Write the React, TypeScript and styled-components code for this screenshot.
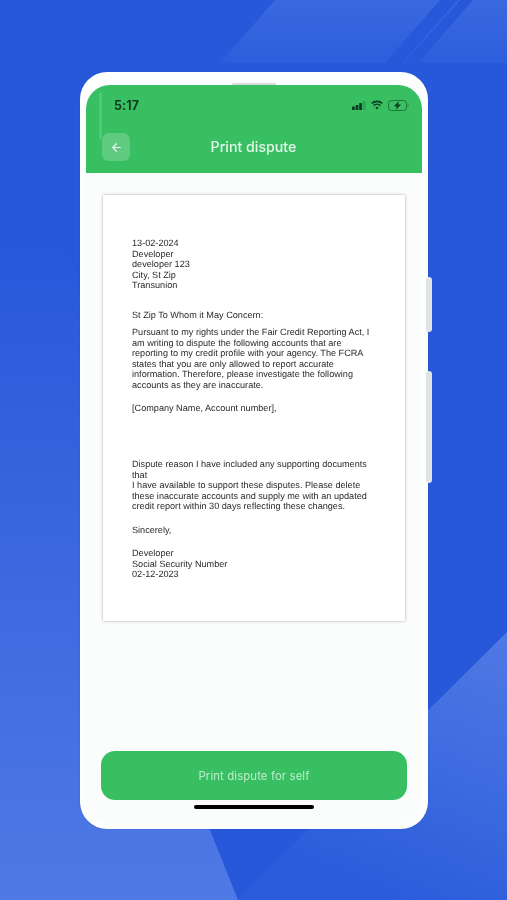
import React from 'react';
import styled, { createGlobalStyle } from 'styled-components';
import { ArrowLeft } from 'lucide-react';

const Global = createGlobalStyle`
  html, body { margin: 0; padding: 0; height: 100%; }
  body { font-family: "Inter", "Liberation Sans", sans-serif; background: #2758da; }
  * { box-sizing: border-box; }
`;

const Page = styled.div`
  position: relative;
  width: 507px;
  height: 900px;
  overflow: hidden;
  background: #2758da;
  padding-top: 72px;
  display: flex;
  justify-content: center;
  align-items: flex-start;
  filter: blur(0.35px);
`;

const Backdrop = styled.svg`
  position: absolute;
  inset: 0;
`;

const Phone = styled.div`
  position: relative;
  width: 348px;
  height: 757px;
  margin-left: 1px;
  background: #fdfefe;
  border-radius: 27px;
  padding: 13px 6px 6px;
  display: flex;
  box-shadow: 0 0 1px rgba(20, 50, 130, 0.5);
`;

const SideKey = styled.div<{ $top: number; $height: number }>`
  position: absolute;
  right: -4px;
  top: ${p => p.$top}px;
  width: 6px;
  height: ${p => p.$height}px;
  background: #dfe3e4;
  border-radius: 3px;
`;

const Speaker = styled.div`
  position: absolute;
  top: 11px;
  left: 152px;
  width: 44px;
  height: 3px;
  background: #d5dad8;
  border-radius: 2px;
`;

const Screen = styled.div`
  flex: 1;
  display: flex;
  flex-direction: column;
  background: #fbfdfd;
  border-radius: 24px;
`;

const Header = styled.header`
  position: relative;
  height: 88px;
  background: #37bf62;
  border-radius: 24px 24px 0 0;
  padding: 11px 13px 0 28px;
  flex-shrink: 0;
`;

const Glint = styled.div`
  position: absolute;
  left: 13px;
  top: 8px;
  width: 3px;
  height: 46px;
  background: rgba(255, 255, 255, 0.14);
`;

const StatusBar = styled.div`
  display: flex;
  align-items: center;
  justify-content: space-between;
  height: 18px;
`;

const Time = styled.span`
  font-size: 12.5px;
  font-weight: 700;
  color: #0f3a1f;
  letter-spacing: 0.1px;
`;

const StatusIcons = styled.div`
  display: flex;
  align-items: center;
  gap: 5px;
`;

const NavRow = styled.div`
  position: absolute;
  left: 16px;
  right: 16px;
  top: 48px;
  height: 28px;
  display: flex;
  align-items: center;
  justify-content: center;
`;

const BackButton = styled.button`
  position: absolute;
  left: 0;
  top: 0;
  width: 28px;
  height: 28px;
  padding: 0;
  border: 0;
  border-radius: 7px;
  background: rgba(255, 255, 255, 0.2);
  color: #e8f8ee;
  display: flex;
  align-items: center;
  justify-content: center;
`;

const Title = styled.h1`
  margin: -2px 0 0 -1px;
  font-size: 14.2px;
  font-weight: 500;
  color: #e4f7ea;
`;

const Content = styled.main`
  flex: 1;
  display: flex;
  flex-direction: column;
  padding: 22px 15px 0;
`;

const Paper = styled.article`
  margin: 0 2px;
  height: 426px;
  background: #fff;
  box-shadow: 0 0 3px rgba(80, 90, 90, 0.4), 0 0 1px rgba(80, 90, 90, 0.3);
  padding: 43px 30px 0 29px;
  font-family: "Liberation Sans", Arial, sans-serif;
  font-size: 9.15px;
  line-height: 10.55px;
  color: #2b2b2b;
  text-rendering: geometricPrecision;
`;

const Block = styled.p<{ $gap?: number }>`
  margin: ${p => p.$gap ?? 0}px 0 0;
`;

const PrintButton = styled.button`
  margin-top: auto;
  height: 49px;
  border: 0;
  border-radius: 14px;
  background: #37bf62;
  color: #bdeccb;
  font-family: "Inter", sans-serif;
  font-size: 11.4px;
  font-weight: 400;
  letter-spacing: 0.1px;
  padding-bottom: 1px;
`;

const HomeBar = styled.div`
  width: 120px;
  height: 4px;
  margin: 5px auto 14px;
  border-radius: 2px;
  background: #000;
`;

const Signal = () => (
  <svg width="14" height="9" viewBox="0 0 14 9">
    <rect x="0" y="5.5" width="2.8" height="3.5" rx="0.6" fill="#0f3a1f" />
    <rect x="3.6" y="4" width="2.8" height="5" rx="0.6" fill="#0f3a1f" />
    <rect x="7.2" y="2" width="2.8" height="7" rx="0.6" fill="#0f3a1f" />
    <rect x="10.8" y="0" width="2.8" height="9" rx="0.6" fill="#0f3a1f" opacity="0.2" />
  </svg>
);

const Wifi = () => (
  <svg width="12" height="10" viewBox="0 0 13 10" fill="none" stroke="#0f3a1f" strokeWidth="1.8">
    <path d="M0.8 3.4a8.2 8.2 0 0 1 11.4 0" />
    <path d="M2.9 5.6a5.2 5.2 0 0 1 7.2 0" />
    <path d="M6.5 9.8 4.7 7.8a2.6 2.6 0 0 1 3.6 0Z" fill="#0f3a1f" stroke="none" />
  </svg>
);

const Battery = () => (
  <svg width="21" height="11" viewBox="0 0 21 11">
    <rect x="0.5" y="0.5" width="18" height="10" rx="3" fill="none" stroke="#0f3a1f" strokeOpacity="0.55" />
    <path d="M19.6 3.8c.8.3 1.2.9 1.2 1.7s-.4 1.4-1.2 1.7Z" fill="#0f3a1f" fillOpacity="0.45" />
    <path d="M11 1 5.8 6.2h3L7.8 10l5.2-5.4h-3Z" fill="#0f3a1f" />
  </svg>
);

export default function App() {
  return (
    <Page>
      <Global />
      <Backdrop width="507" height="900" viewBox="0 0 507 900">
        <defs>
          <linearGradient id="left" x1="0" y1="155" x2="0" y2="900" gradientUnits="userSpaceOnUse">
            <stop offset="0.12" stopColor="#2758da" />
            <stop offset="1" stopColor="#5079e5" />
          </linearGradient>
          <linearGradient id="right" x1="507" y1="632" x2="400" y2="900" gradientUnits="userSpaceOnUse">
            <stop offset="0" stopColor="#5079e4" />
            <stop offset="1" stopColor="#2b5ddb" />
          </linearGradient>
          <linearGradient id="top" x1="0" y1="0" x2="0" y2="64" gradientUnits="userSpaceOnUse">
            <stop offset="0" stopColor="#3a69e0" />
            <stop offset="1" stopColor="#2c5ddb" />
          </linearGradient>
        </defs>
        <polygon points="0,155 78,277 210,830 238,900 0,900" fill="url(#left)" />
        <polygon points="507,632 237,900 507,900" fill="url(#right)" />
        <polygon points="220,63 275,0 440,0 385,63" fill="url(#top)" />
        <polygon points="402,63 458,0 460,0 404,63" fill="url(#top)" />
        <polygon points="418,63 473,0 507,0 507,63" fill="url(#top)" />
      </Backdrop>
      <Phone>
        <SideKey $top={205} $height={55} />
        <SideKey $top={299} $height={112} />
        <Speaker />
        <Screen>
          <Header>
            <Glint />
            <StatusBar>
              <Time>5:17</Time>
              <StatusIcons>
                <Signal />
                <Wifi />
                <Battery />
              </StatusIcons>
            </StatusBar>
            <NavRow>
              <BackButton aria-label="Back">
                <ArrowLeft size={13} strokeWidth={2.2} />
              </BackButton>
              <Title>Print dispute</Title>
            </NavRow>
          </Header>
          <Content>
            <Paper>
              <Block>
                13-02-2024<br />
                Developer<br />
                developer 123<br />
                City, St Zip<br />
                Transunion
              </Block>
              <Block $gap={19}>St Zip To Whom it May Concern:</Block>
              <Block $gap={7}>
                Pursuant to my rights under the Fair Credit Reporting Act, I<br />
                am writing to dispute the following accounts that are<br />
                reporting to my credit profile with your agency. The FCRA<br />
                states that you are only allowed to report accurate<br />
                information. Therefore, please investigate the following<br />
                accounts as they are inaccurate.
              </Block>
              <Block $gap={12}>[Company Name, Account number],</Block>
              <Block $gap={46}>
                Dispute reason I have included any supporting documents<br />
                that<br />
                I have available to support these disputes. Please delete<br />
                these inaccurate accounts and supply me with an updated<br />
                credit report within 30 days reflecting these changes.
              </Block>
              <Block $gap={13}>Sincerely,</Block>
              <Block $gap={13}>
                Developer<br />
                Social Security Number<br />
                02-12-2023
              </Block>
            </Paper>
            <PrintButton>Print dispute for self</PrintButton>
            <HomeBar />
          </Content>
        </Screen>
      </Phone>
    </Page>
  );
}
